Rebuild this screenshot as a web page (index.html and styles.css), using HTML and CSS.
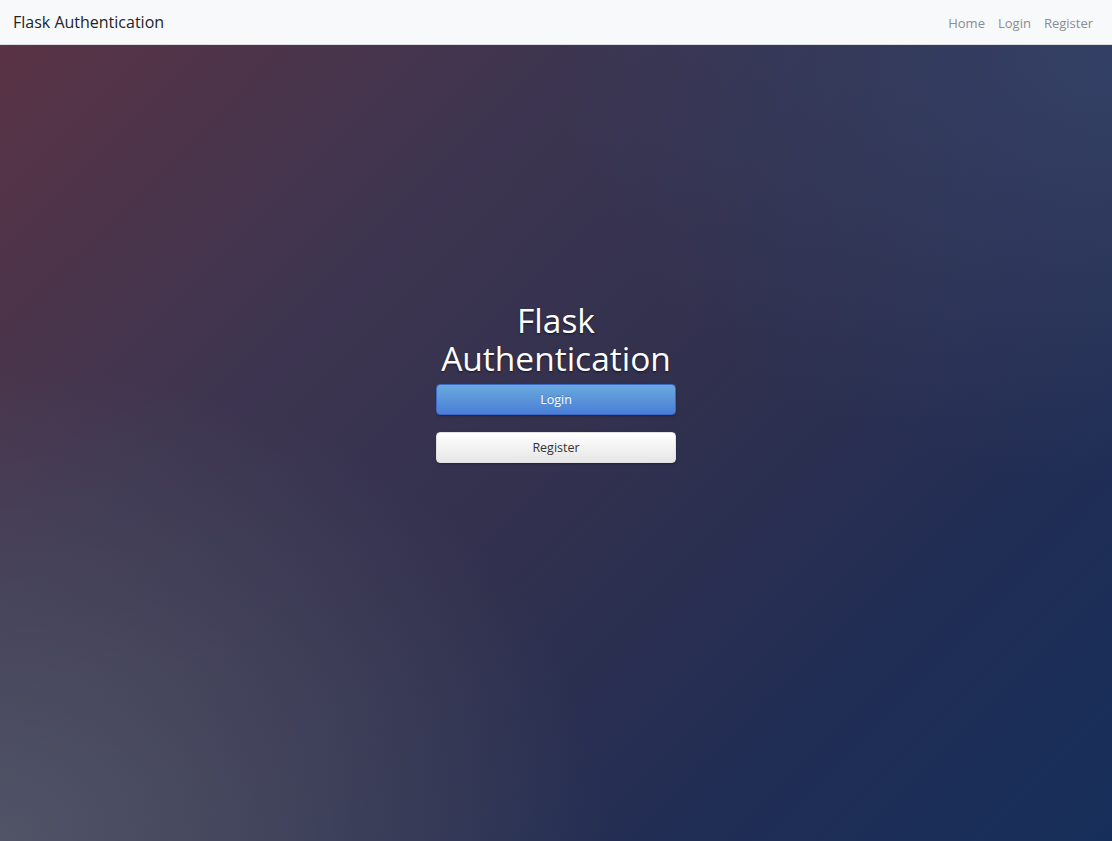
FILE: index.html
```html
<!DOCTYPE html>
<html lang="en">
<head>
<meta charset="utf-8">
<title>Flask Authentication</title>
<link rel="stylesheet" href="styles.css">
</head>
<body>
<nav class="navbar">
  <a class="brand" href="#">Flask Authentication</a>
  <ul class="nav-links">
    <li><a href="#">Home</a></li>
    <li><a href="#">Login</a></li>
    <li><a href="#">Register</a></li>
  </ul>
</nav>
<main class="hero">
  <div class="panel">
    <h1 class="title">Flask Authentication</h1>
    <a class="btn btn-primary" href="#">Login</a>
    <a class="btn btn-light" href="#">Register</a>
  </div>
</main>
</body>
</html>
```
FILE: styles.css
```css
* { box-sizing: border-box; }
html, body { height: 100%; }
body {
  margin: 0;
  font-family: "Open Sans", "Noto Sans", sans-serif;
  display: flex;
  flex-direction: column;
  background: #2f2e50;
}
.navbar {
  height: 45px;
  flex: 0 0 45px;
  background: #f8f9fa;
  border-bottom: 1px solid #dcdde0;
  display: flex;
  align-items: center;
  justify-content: space-between;
  padding: 0 19px 0 13px;
}
.brand {
  color: #212529;
  text-decoration: none;
  font-size: 16px;
}
.nav-links {
  list-style: none;
  margin: 0;
  padding: 0;
  display: flex;
  gap: 13px;
}
.nav-links a {
  color: #8a8d91;
  text-decoration: none;
  font-size: 13px;
}
.hero {
  flex: 1;
  display: flex;
  justify-content: center;
  padding-top: 256px;
  background:
    radial-gradient(ellipse 55% 60% at 0% 100%, rgba(82,86,104,0.95) 0%, rgba(82,86,104,0) 100%),
    radial-gradient(ellipse 50% 55% at 100% 0%, rgba(52,66,104,0.9) 0%, rgba(52,66,104,0) 100%),
    linear-gradient(135deg, #5a3345 0%, #3d3550 30%, #30304e 55%, #1f2d55 80%, #162f5a 100%);
}
.panel {
  width: 240px;
  display: flex;
  flex-direction: column;
  align-items: stretch;
}
.title {
  margin: 0 0 7px;
  font-weight: 400;
  font-size: 33.5px;
  line-height: 38px;
  text-align: center;
  color: #fff;
  text-shadow: 0 1px 2px rgba(0,0,0,0.6);
}
.btn {
  display: flex;
  align-items: center;
  justify-content: center;
  height: 31px;
  border-radius: 4px;
  font-size: 12.5px;
  text-decoration: none;
}
.btn-primary {
  color: #fff;
  background: linear-gradient(#6aaade, #4a7ed6);
  border: 1px solid #3c6ac6;
  text-shadow: 0 -1px 0 rgba(0,0,0,0.2);
  box-shadow: 0 1px 2px rgba(0,0,0,0.3);
}
.btn-light {
  margin-top: 17px;
  color: #333;
  background: linear-gradient(#ffffff, #e6e6e6);
  border: 1px solid #e2e2e2;
  box-shadow: 0 1px 2px rgba(0,0,0,0.3);
}
```
